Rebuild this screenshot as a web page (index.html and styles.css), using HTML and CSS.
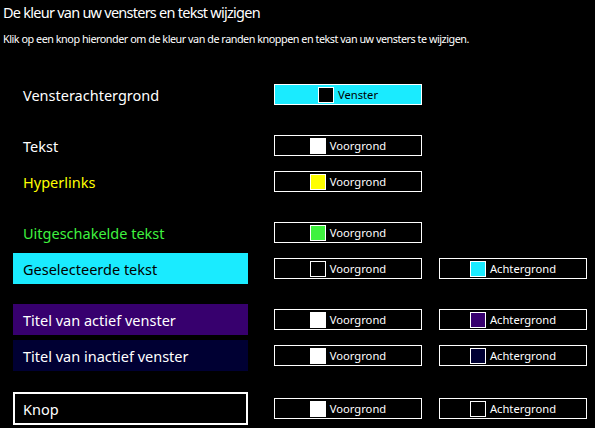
FILE: index.html
```html
<!DOCTYPE html>
<html lang="nl">
<head>
<meta charset="utf-8">
<link rel="stylesheet" href="styles.css">
</head>
<body>
<div class="page">
  <h1 class="title">De kleur van uw vensters en tekst wijzigen</h1>
  <p class="intro">Klik op een knop hieronder om de kleur van de randen knoppen en tekst van uw vensters te wijzigen.</p>

  <div class="groups">
    <div class="group">
      <div class="row">
        <div class="label">Vensterachtergrond</div>
        <button class="btn btn-cyan"><span class="swatch sw-black"></span>Venster</button>
      </div>
    </div>

    <div class="group">
      <div class="row">
        <div class="label">Tekst</div>
        <button class="btn"><span class="swatch sw-white"></span>Voorgrond</button>
      </div>
      <div class="row">
        <div class="label label-yellow">Hyperlinks</div>
        <button class="btn"><span class="swatch sw-yellow"></span>Voorgrond</button>
      </div>
    </div>

    <div class="group">
      <div class="row">
        <div class="label label-green">Uitgeschakelde tekst</div>
        <button class="btn"><span class="swatch sw-green"></span>Voorgrond</button>
      </div>
      <div class="row">
        <div class="label label-selected">Geselecteerde tekst</div>
        <button class="btn"><span class="swatch sw-black"></span>Voorgrond</button>
        <button class="btn"><span class="swatch sw-cyan"></span>Achtergrond</button>
      </div>
    </div>

    <div class="group">
      <div class="row">
        <div class="label label-active">Titel van actief venster</div>
        <button class="btn"><span class="swatch sw-white"></span>Voorgrond</button>
        <button class="btn"><span class="swatch sw-purple"></span>Achtergrond</button>
      </div>
      <div class="row">
        <div class="label label-inactive">Titel van inactief venster</div>
        <button class="btn"><span class="swatch sw-white"></span>Voorgrond</button>
        <button class="btn"><span class="swatch sw-navy"></span>Achtergrond</button>
      </div>
    </div>

    <div class="group group-last">
      <div class="row">
        <div class="label label-knop">Knop</div>
        <button class="btn"><span class="swatch sw-white"></span>Voorgrond</button>
        <button class="btn"><span class="swatch sw-black"></span>Achtergrond</button>
      </div>
    </div>
  </div>
</div>
</body>
</html>
```

FILE: styles.css
```css
html, body {
  margin: 0;
  padding: 0;
  background: #000;
}
body {
  width: 595px;
  height: 428px;
  overflow: hidden;
  color: #fff;
  font-family: "Noto Sans", "Open Sans", sans-serif;
}
.page {
  padding: 0 0 0 3px;
}
.title {
  margin: 0;
  padding-top: 2px;
  font-size: 14.5px;
  letter-spacing: -0.75px;
  font-weight: normal;
  line-height: 20px;
}
.intro {
  margin: 9px 0 0 0;
  font-size: 10.8px;
  letter-spacing: -0.47px;
  line-height: 16px;
}
.groups {
  display: flex;
  flex-direction: column;
  gap: 20px;
  margin-top: 32px;
  padding-left: 10px;
}
.group {
  display: flex;
  flex-direction: column;
  gap: 5px;
}
.group-last {
  margin-top: 1px;
}
.row {
  display: grid;
  grid-template-columns: 244px 148px 148px;
  column-gap: 17px;
  align-items: center;
  min-height: 31px;
}
.label {
  box-sizing: border-box;
  width: 235px;
  height: 31px;
  padding-left: 10px;
  display: flex;
  align-items: center;
  font-size: 14.5px;
  color: #fff;
}
.label-yellow { color: #ffff00; }
.label-green { color: #3ff23f; }
.label-selected { background: #1aebff; color: #000; }
.label-active { background: #37006e; }
.label-inactive { background: #000033; }
.label-knop {
  height: 33px;
  border: 2px solid #fff;
  padding-left: 8px;
}
.btn {
  box-sizing: border-box;
  width: 148px;
  height: 21px;
  margin: 0;
  padding: 0;
  border: 1px solid #fff;
  background: #000;
  color: #fff;
  font-family: inherit;
  font-size: 11.2px;
  display: flex;
  align-items: center;
  justify-content: center;
  gap: 4px;
}
.btn-cyan {
  background: #1aebff;
  color: #000;
}
.swatch {
  box-sizing: border-box;
  width: 16px;
  height: 16px;
  border: 1px solid #fff;
}
.sw-black { background: #000; }
.sw-white { background: #fff; }
.sw-yellow { background: #ffff00; }
.sw-green { background: #3ff23f; }
.sw-cyan { background: #1aebff; }
.sw-purple { background: #37006e; }
.sw-navy { background: #000033; }
```
